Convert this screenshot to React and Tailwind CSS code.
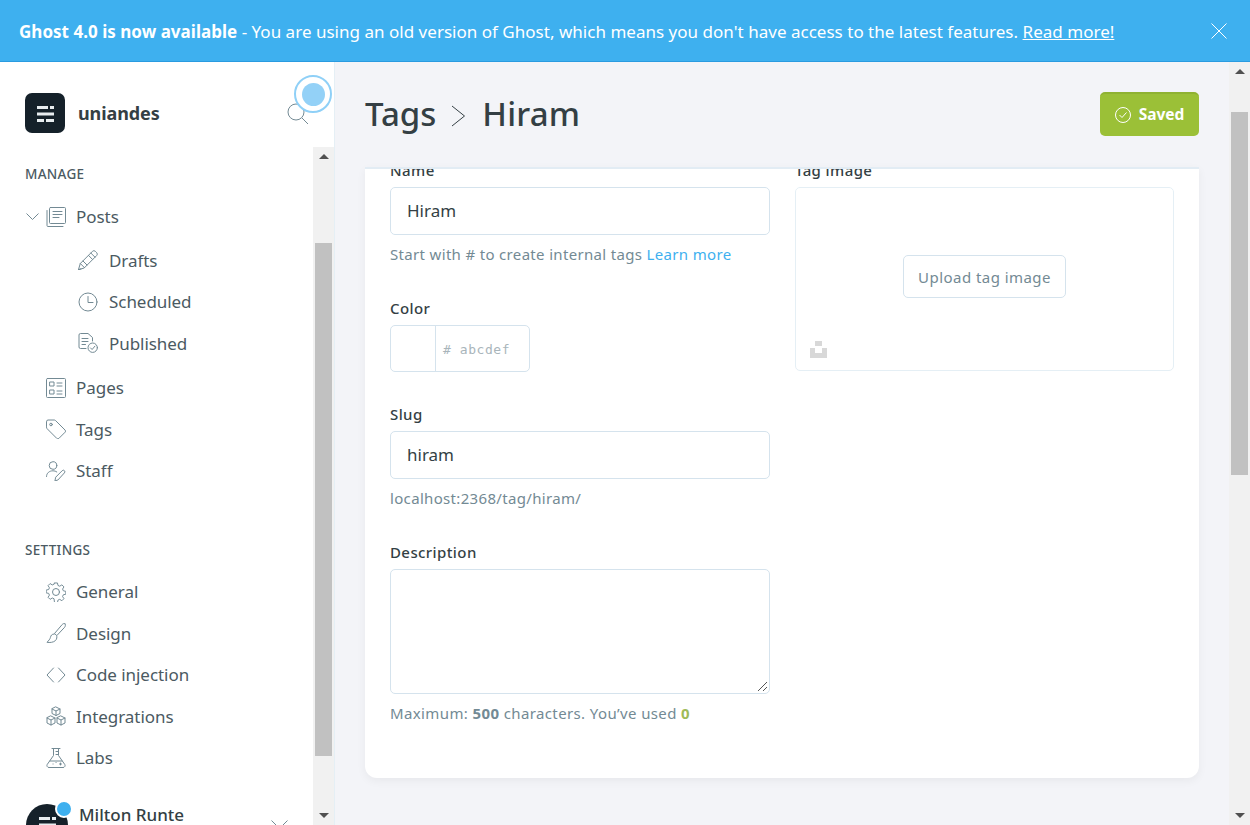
import React from "react";

const Ico = ({ children, w = 20, h = 20, vb, className = "" }) => (
  <svg width={w} height={h} viewBox={vb || `0 0 ${w} ${h}`} fill="none" stroke="#738a94" strokeWidth="1" strokeLinecap="round" strokeLinejoin="round" className={`shrink-0 ${className}`}>
    {children}
  </svg>
);

const icons = {
  posts: <Ico><path d="M4.500 0.500h14a1 1 0 0 1 1 1v14a1 1 0 0 1-1 1h-14a1 1 0 0 1-1-1v-14a1 1 0 0 1 1-1z" /><path d="M1 3.500v15a1 1 0 0 0 1 1h15" /><path d="M7 4.500h9M7 7.500h9M7 10.500h6" /></Ico>,
  drafts: <Ico><path d="M0.500 19.500l1.800-6L14.500 1.300a2 2 0 0 1 2.800 0l1.400 1.400a2 2 0 0 1 0 2.800L6.500 17.700z" /><path d="M12.800 3l4.200 4.200M2.300 13.500l4.200 4.200M5 11l4 4M10.500 5.400l4 4M0.500 19.500l2.500-.7" /></Ico>,
  scheduled: <Ico><circle cx="10" cy="10" r="9" /><path d="M10 4.500V10.500h5" /></Ico>,
  published: <Ico><path d="M8 15.500H2.500a1.500 1.500 0 0 1-1.500-1.500V2A1.500 1.500 0 0 1 2.500 0.500h7.500l4.500 4v3.500" /><path d="M4 5.500h6M4 8.500h6M4 11.500h3.500" /><circle cx="14.700" cy="14.700" r="4.700" /><path d="M12.500 14.900l1.600 1.600 2.800-3.300" /></Ico>,
  pages: <Ico><rect x="0.500" y="0.500" width="19" height="19" rx="1" /><path d="M4 4h4v4H4zM4 12h4v4H4zM11 5h5M11 8h5M11 13h5M11 16h5" /></Ico>,
  tags: <Ico><path d="M0.500 2.500A1.500 1.500 0 0 1 2 1h6.200a2 2 0 0 1 1.400.6l9.500 9.500a1.500 1.500 0 0 1 0 2.100l-6.200 6.200a1.500 1.500 0 0 1-2.100 0L1.100 9.700a2 2 0 0 1-.6-1.400z" /><circle cx="5" cy="5.500" r="1.300" /></Ico>,
  staff: <Ico><circle cx="7" cy="4.500" r="3.800" /><path d="M0.500 15.500c0-3.500 2.900-5.700 6.500-5.700 1.500 0 2.800.4 3.800 1.100" /><path d="M9 19.500l.7-3.300 6.500-6.500a1.500 1.500 0 0 1 2.200 0 1.600 1.600 0 0 1 0 2.200l-6.200 6.800z" /></Ico>,
  general: <Ico><circle cx="10" cy="10" r="3.500" /><path d="M8.500 0.800h3l.5 2.500 1.800.8 2.200-1.400 2.100 2.100-1.400 2.200.8 1.800 2.500.5v3l-2.500.5-.8 1.800 1.400 2.200-2.100 2.100-2.200-1.400-1.800.8-.5 2.500h-3L8 16.900l-1.800-.8L4 17.500l-2.100-2.100 1.400-2.200-.8-1.800L0 10.900V8l2.500-.5.8-1.800L1.900 3.500 4 1.400l2.200 1.400L8 2z" transform="translate(0.200 0.200) scale(.98)" /></Ico>,
  design: <Ico><path d="M19 0.800c-1-.6-2-.2-2.800.7L8.500 10.500l2.300 2.100 7.800-8.300c.8-.9 1.200-2.700.4-3.500z" /><path d="M8.300 11c-2.800 0-3.300 1.500-3.900 3.500-.4 1.700-1.700 3-3.400 4.800 2.500.5 6.500.2 8.500-1.800 1.500-1.500 1.500-3.500 1.300-4.400" /></Ico>,
  code: <Ico><path d="M7.500 3L1 10l6.500 7M12.500 3L19 10l-6.500 7" /></Ico>,
  integrations: <Ico><path d="M10 1l4 2v4.500l-4 2-4-2V3zM6 3l4 2 4-2M10 5v4.500" /><path d="M5 10l4 2v5l-4 2-4-2v-5zM1 12l4 2 4-2M5 14v5" /><path d="M15 10l4 2v5l-4 2-4-2v-5zM11 12l4 2 4-2M15 14v5" /></Ico>,
  labs: <Ico><path d="M6 0.500h8M7.500 0.500v7L1.200 16.500A2 2 0 0 0 3 19.500h14a2 2 0 0 0 1.800-3L12.500 7.500v-7" /><path d="M12.500 3.500H10M12.500 6.500H10M4 13h12" /><path d="M7 16h.1M10 14.500h.1M13.500 16h2M14.500 15v2" /></Ico>,
};

function Item({ icon, label, sub, chev }) {
  return (
    <div className={`flex items-center h-[41.5px] ${sub ? "pl-[78px]" : "pl-[46px]"} relative`}>
      {chev && (
        <svg width="13" height="7" viewBox="0 0 13 7" fill="none" stroke="#738a94" className="absolute left-[26px] top-[17px]"><path d="M.5.500l6 6 6-6" /></svg>
      )}
      {icons[icon]}
      <span className={`text-[17px] text-[#4b5a62] leading-none -tracking-[0.05px] ${sub ? "ml-[11px]" : "ml-[10px]"}`}>{label}</span>
    </div>
  );
}

function Logo({ size = 40, radius = "rounded-[7px]" }) {
  return (
    <div className={`bg-[#15212a] ${radius} flex items-center justify-center shrink-0`} style={{ width: size, height: size }}>
      <svg width="17" height="17" viewBox="0 0 17 17" fill="#e8edf0">
        <path d="M0 1h11v3H0zM13 1h4v3h-4zM0 7.500h17v3H0zM0 14h7v3H0zM9 14h8v3H9z" />
      </svg>
    </div>
  );
}

const Label = ({ children }) => <div className="text-[15px] font-medium text-[#343f44] leading-[20px] tracking-[0.4px]">{children}</div>;
const Help = ({ children, className = "" }) => <div className={`mt-[8px] text-[15px] text-[#738a94] tracking-[0.33px] leading-[22px] ${className}`}>{children}</div>;

function ScrollBar({ thumbTop, thumbH }) {
  return (
    <div className="w-[21px] shrink-0 bg-[#f1f1f1] h-full relative">
      <div className="absolute left-[5.500px] top-[7px] w-0 h-0 border-x-[5px] border-x-transparent border-b-[5px] border-b-[#505050]" />
      <div className="absolute left-[2px] w-[17px] bg-[#c1c1c1]" style={{ top: thumbTop, height: thumbH }} />
      <div className="absolute left-[5.500px] bottom-[7px] w-0 h-0 border-x-[5px] border-x-transparent border-t-[5px] border-t-[#505050]" />
    </div>
  );
}

export default function App() {
  return (
    <div className="w-[1250px] h-[825px] overflow-hidden flex flex-col bg-[#f3f4f8]" style={{ fontFamily: '"Noto Sans", sans-serif' }}>
      {/* banner */}
      <div className="h-[62px] shrink-0 bg-[#3eb0ef] border-b border-[#2a9be0] flex items-center pl-[19px] pr-[23px] pt-[2px] text-white text-[17px] tracking-[0.02px]">
        <span className="font-bold">Ghost 4.0 is now available</span>
        <span>&nbsp;- You are using an old version of Ghost, which means you don't have access to the latest features.&nbsp;</span>
        <span className="underline">Read more!</span>
        <svg width="16" height="16" viewBox="0 0 16 16" fill="none" stroke="#fff" className="ml-auto -mt-[2px]"><path d="M.5.500l15 15M15.500.500l-15 15" /></svg>
      </div>

      <div className="flex flex-1 min-h-0">
        {/* sidebar */}
        <div className="w-[335px] shrink-0 bg-white border-r border-[#e5eff5] flex flex-col relative">
          <div className="h-[85px] shrink-0 flex items-start pt-[31px] pl-[25px] relative">
            <Logo />
            <span className="ml-[13px] mt-[8px] text-[18px] font-bold text-[#343f44] leading-[24px] -tracking-[0.1px]">uniandes</span>
            <svg width="21" height="21" viewBox="0 0 21 21" fill="none" stroke="#738a94" className="absolute left-[287px] top-[41px]"><circle cx="9" cy="9" r="8" /><path d="M15 15l6 6" /></svg>
            <div className="absolute left-[294px] top-[13px] w-[38px] h-[38px] rounded-full border-[2px] border-[#8fd0f7] bg-white flex items-center justify-center">
              <div className="w-[23px] h-[23px] rounded-full bg-[#93d1f7]" />
            </div>
          </div>
          <div className="flex flex-1 min-h-0">
            <div className="w-[313px] shrink-0 overflow-hidden relative">
              <div className="pl-[25px] pt-[18px] text-[13.500px] font-medium text-[#4b5a62] tracking-[0.3px] leading-[18px] h-[49px]">MANAGE</div>
              <Item icon="posts" label="Posts" chev />
              <div className="h-[2px]" />
              <Item icon="drafts" label="Drafts" sub />
              <Item icon="scheduled" label="Scheduled" sub />
              <Item icon="published" label="Published" sub />
              <div className="h-[3px]" />
              <Item icon="pages" label="Pages" />
              <Item icon="tags" label="Tags" />
              <Item icon="staff" label="Staff" />
              <div className="pl-[25px] pt-[49px] text-[13.500px] font-medium text-[#4b5a62] tracking-[0.3px] leading-[18px] h-[79.500px]">SETTINGS</div>
              <Item icon="general" label="General" />
              <Item icon="design" label="Design" />
              <Item icon="code" label="Code injection" />
              <Item icon="integrations" label="Integrations" />
              <Item icon="labs" label="Labs" />
              <div className="flex pl-[26px] pt-[25px] relative">
                <Logo size={42} radius="rounded-full" />
                <div className="absolute left-[55px] top-[21px] w-[18px] h-[18px] rounded-full bg-[#3eb0ef] border-2 border-white" />
                <span className="ml-[11px] text-[17px] font-medium text-[#343f44] leading-[22px]">Milton Runte</span>
                <svg width="18" height="9" viewBox="0 0 18 9" fill="none" stroke="#738a94" className="absolute left-[271px] top-[41px]"><path d="M.5.500l8 8 8-8" /></svg>
              </div>
            </div>
            <ScrollBar thumbTop={96} thumbH={513} />
          </div>
        </div>

        {/* main */}
        <div className="flex-1 min-w-0 flex flex-col pl-[30px] pr-[30px]">
          <div className="h-[105px] shrink-0 flex items-start justify-between">
            <div className="flex items-center mt-[27px] text-[#343f44] text-[33px] font-medium leading-[50px]">
              <span>Tags</span>
              <svg width="15" height="22" viewBox="0 0 15 22" fill="none" stroke="#343f44" className="ml-[15px] mr-[16px] mt-[3px]"><path d="M1 1l12.500 10L1 21" /></svg>
              <span className="tracking-[0.2px]">Hiram</span>
            </div>
            <div className="mt-[30px] w-[99px] h-[44px] rounded-[5px] bg-[#9bc037] border-t-2 border-[#8fb232] flex items-center justify-center gap-[8px] text-white text-[15.500px] font-bold">
              <svg width="16" height="16" viewBox="0 0 16 16" fill="none" stroke="#fff"><circle cx="8" cy="8" r="7.500" /><path d="M4.500 8l2.500 2.500 4.500-5" /></svg>
              Saved
            </div>
          </div>
          <div className="w-[834px] h-[611px] shrink-0 bg-white rounded-b-[12px] border-t-2 border-[#e2ecf4] shadow-[0_3px_10px_rgba(0,0,0,0.05)] overflow-hidden flex gap-[25px] pl-[25px] pr-[25px]">
            <div className="w-[380px] shrink-0 -mt-[9px]">
              <Label>Name</Label>
              <div className="mt-[7px] h-[48px] rounded-[5px] border border-[#d5e3ed] flex items-center pl-[16px] text-[17px] text-[#343f44]">Hiram</div>
              <Help>Start with # to create internal tags <span className="text-[#3eb0ef]">Learn more</span></Help>
              <div className="mt-[33px]"><Label>Color</Label></div>
              <div className="mt-[7px] w-[140px] h-[47px] rounded-[5px] border border-[#d5e3ed] flex">
                <div className="w-[45px] border-r border-[#d5e3ed]" />
                <div className="pl-[7px] pt-[2px] flex items-center text-[#a9b5bb] text-[13px] tracking-[0.55px]" style={{ fontFamily: '"DejaVu Sans Mono", monospace' }}># abcdef</div>
              </div>
              <div className="mt-[32px]"><Label>Slug</Label></div>
              <div className="mt-[7px] h-[48px] rounded-[5px] border border-[#d5e3ed] flex items-center pl-[16px] text-[17px] text-[#343f44]">hiram</div>
              <Help>localhost:2368/tag/hiram/</Help>
              <div className="mt-[33px]"><Label>Description</Label></div>
              <div className="mt-[7px] h-[125px] rounded-[5px] border border-[#d5e3ed] relative">
                <svg width="11" height="11" viewBox="0 0 11 11" fill="none" stroke="#555" className="absolute right-[1px] bottom-[1px]"><path d="M1 10L10 1M6 10l4-4" /></svg>
              </div>
              <Help className="tracking-[0.38px]">Maximum: <b className="font-bold">500</b> characters. You’ve used <b className="font-bold text-[#9fbb58]">0</b></Help>
            </div>
            <div className="w-[379px] shrink-0 -mt-[9px]">
              <Label>Tag image</Label>
              <div className="mt-[7px] h-[184px] pb-[6px] rounded-[5px] border border-[#e5eff5] relative flex items-center justify-center">
                <div className="h-[43px] w-[163px] pt-[2px] rounded-[5px] border border-[#d5e3ed] flex items-center justify-center text-[15px] text-[#738a94] tracking-[0.45px]">Upload tag image</div>
                <svg width="17" height="17" viewBox="0 0 17 17" fill="#d8d8d8" className="absolute left-[14px] bottom-[12px]"><path d="M5 0h7v5H5zM0 7h5v5h7V7h5v10H0z" /></svg>
              </div>
            </div>
          </div>
        </div>
        <ScrollBar thumbTop={50} thumbH={363} />
      </div>
    </div>
  );
}
